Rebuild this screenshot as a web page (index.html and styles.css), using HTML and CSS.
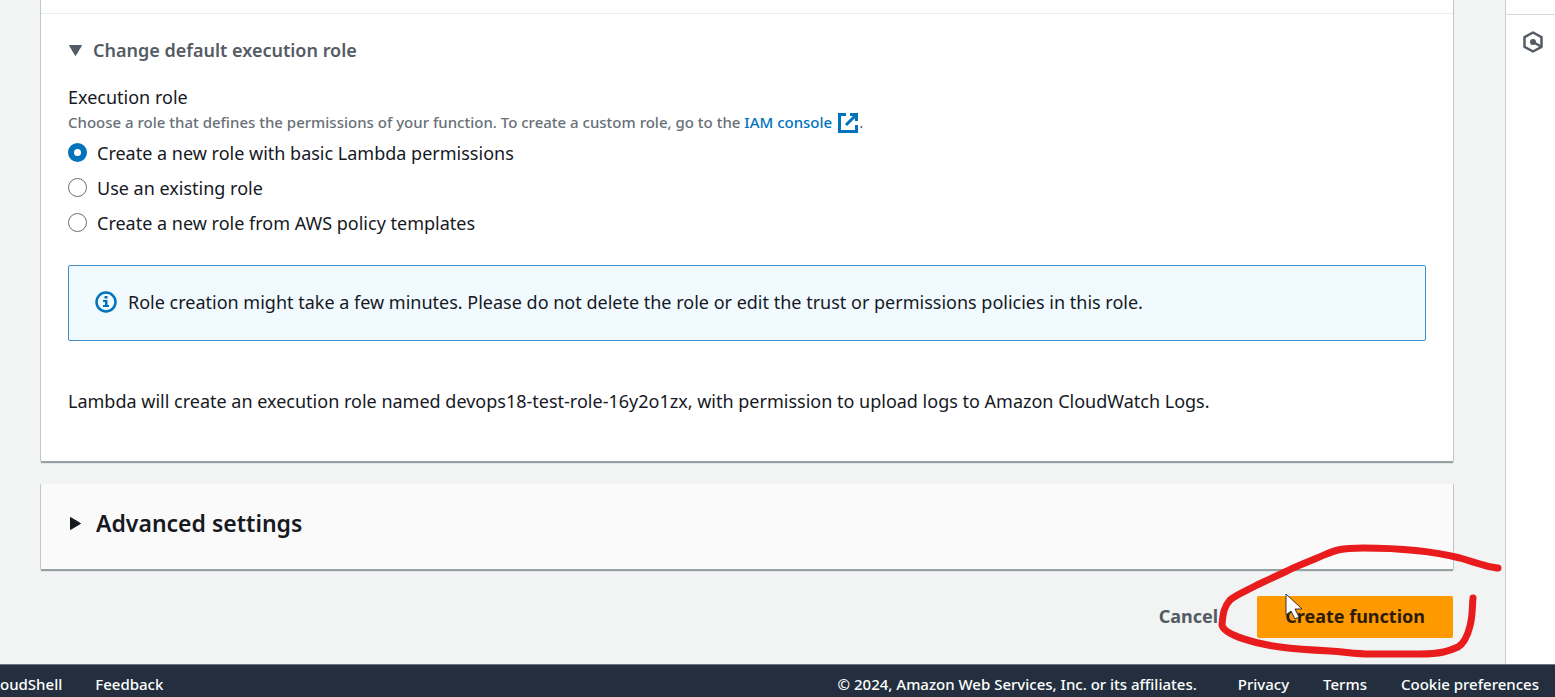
FILE: index.html
```html
<!DOCTYPE html>
<html lang="en">
<head>
<meta charset="utf-8">
<title>Create function - Lambda</title>
<link rel="stylesheet" href="styles.css">
</head>
<body>
<div class="shell">
  <main class="content">
    <section class="card">
      <details class="role" open>
        <summary class="role-summary">
          <svg class="caret" viewBox="0 0 14 14" aria-hidden="true"><path d="M1.500 2.500h12L7.500 12.500z" fill="currentColor" stroke="currentColor" stroke-linejoin="round"/></svg>
          <span>Change default execution role</span>
        </summary>
        <fieldset class="role-options">
          <legend class="label">Execution role</legend>
          <p class="hint">Choose a role that defines the permissions of your function. To create a custom role, go to the <a href="#iam" class="link">IAM console<svg class="external" viewBox="0 0 20 20" aria-hidden="true"><path d="M8 1.500H1.500v17h17V12M12 1.500h6.500V8M18 2L8 12" fill="none" stroke="currentColor" stroke-width="3"/></svg></a>.</p>
          <label class="option"><input type="radio" name="role" class="radio" checked>Create a new role with basic Lambda permissions</label>
          <label class="option"><input type="radio" name="role" class="radio">Use an existing role</label>
          <label class="option"><input type="radio" name="role" class="radio">Create a new role from AWS policy templates</label>
        </fieldset>
        <div class="alert">
          <svg class="info" viewBox="0 0 22 22" aria-hidden="true"><circle cx="11" cy="11" r="9.500" fill="none" stroke="currentColor" stroke-width="2.500"/><path d="M9.500 5h3v2.500h-3zM8 9h4.500v5H14v2H8v-2h2v-3H8z" fill="currentColor"/></svg>
          <span>Role creation might take a few minutes. Please do not delete the role or edit the trust or permissions policies in this role.</span>
        </div>
        <p class="note">Lambda will create an execution role named devops18-test-role-16y2o1zx, with permission to upload logs to Amazon CloudWatch Logs.</p>
      </details>
    </section>
    <details class="card advanced">
      <summary class="advanced-summary">
        <svg class="caret" viewBox="0 0 14 14" aria-hidden="true"><path d="M2.500 1.500v12L12.500 7.500z" fill="currentColor" stroke="currentColor" stroke-linejoin="round"/></svg>
        <span>Advanced settings</span>
      </summary>
    </details>
    <div class="actions">
      <button type="button" class="button">Cancel</button>
      <button type="button" class="button primary">Create function</button>
      <svg class="marker" viewBox="0 0 290 118" aria-hidden="true">
        <path d="M70 52v21l5-4 4 8 4-2-4-8h7z" fill="#fff" stroke="#333" stroke-linejoin="round"/>
        <path d="M282 26C275 26 267 23 244 16C220 10 185 6 147 6C121 6 118 9 101 16C85 23 80 24 71 29L41 43C28 50 20 53 14 58C7 66 7 73 6 83C8 93 40 102 64 105C80 107 95 108 114 109C130 110 140 112 154 112H204C225 112 233 109 242 105C249 101 252 92 254 84C257 72 256 65 257 56" fill="none" stroke="#e81c1c" stroke-width="7" stroke-linecap="round" stroke-linejoin="round"/>
      </svg>
    </div>
  </main>
  <aside class="rail">
    <button type="button" class="rail-button" aria-label="Tools">
      <svg class="hexagon" viewBox="0 0 20 22" aria-hidden="true"><path d="M10 1.500l8.500 4.700v9.600L10 20.500l-8.500-4.700V6.200z" fill="none" stroke="currentColor" stroke-width="2.500" stroke-linejoin="round"/><circle cx="10" cy="11" r="3" fill="currentColor"/><path d="M10 11l8 4.500" stroke="currentColor" stroke-width="2.500"/></svg>
    </button>
  </aside>
</div>
<footer class="footer">
  <nav class="footer-group"><a href="#shell">oudShell</a><a href="#feedback">Feedback</a></nav>
  <nav class="footer-group legal"><span class="copyright">© 2024, Amazon Web Services, Inc. or its affiliates.</span><a href="#privacy">Privacy</a><a href="#terms">Terms</a><a href="#cookies">Cookie preferences</a></nav>
</footer>
</body>
</html>
```
FILE: styles.css
```css
* { box-sizing: border-box; }
body {
  margin: 0;
  min-height: 100vh;
  display: flex;
  flex-direction: column;
  background: #f2f3f3;
  color: #16191f;
  font: 18px/24px "Noto Sans", "Open Sans", sans-serif;
}
p { margin: 0; }
summary { list-style: none; cursor: pointer; }
button { border: 0; background: none; font: inherit; }
.shell { flex: 1; display: flex; }
.content { flex: 1; min-width: 0; padding: 0 52px 26px 41px; }
.card {
  background: #fff;
  box-shadow: 0 2px 1px #95a1a2, -1px 0 #c9cfcf, 1px 0 #c9cfcf;
  padding: 13px 0 48px;
}
.role { border-top: 1px solid #eaeded; padding: 24px 27px 0; }
.role-summary, .advanced-summary { display: flex; align-items: center; font-weight: 600; }
.role-summary { gap: 11px; color: #545b64; }
.caret { width: 14px; height: 14px; }
.role-options { border: 0; margin: 0; padding: 23px 0 0; }
.label { float: left; width: 100%; padding: 0; }
.hint { clear: both; padding: 1px 0; font-size: 15px; font-weight: 500; color: #687078; }
.link { color: #0073bb; text-decoration: none; }
.external { width: 20px; height: 20px; margin: 0 1px 0 6px; vertical-align: -5px; }
.option { display: flex; align-items: center; gap: 10px; height: 35px; }
.radio {
  appearance: none;
  width: 19px;
  height: 19px;
  margin: 0;
  border: 1px solid #687078;
  border-radius: 50%;
  background: #fff;
}
.radio:checked { border: 6px solid #0073bb; }
.alert {
  display: flex;
  align-items: center;
  gap: 11px;
  margin-top: 25px;
  padding: 24px 26px 26px;
  border: 1px solid #3f8fc4;
  border-radius: 2px;
  background: #f1faff;
}
.info { width: 22px; height: 22px; color: #0073bb; }
.note { padding-top: 48px; }
.advanced { margin-top: 23px; padding: 25px 27px 32px; background: #fafafa; }
.advanced-summary { gap: 14px; font-size: 23px; line-height: 28px; }
.actions { position: relative; display: flex; justify-content: flex-end; gap: 11px; margin-top: 27px; }
.button { padding: 8px 28px 10px; border-radius: 2px; font-weight: 700; color: #545b64; }
.primary { background: #ff9900; color: #2b1c0c; }
.marker { position: absolute; top: -54px; right: -53px; width: 290px; height: 118px; pointer-events: none; }
.rail { width: 50px; border-left: 1px solid #c9cfcf; background: #fff; padding-top: 14px; }
.rail-button { display: block; width: 100%; padding: 16px 0 0 4px; border-top: 1px solid #d5dbdb; color: #545b64; }
.hexagon { display: block; width: 20px; height: 22px; margin: 0 auto; }
.footer {
  display: flex;
  justify-content: space-between;
  padding: 7px 16px 1px 0;
  border-top: 1px solid #6b7580;
  background: #232f3e;
  color: #fff;
  font-size: 15px;
  font-weight: 500;
}
.footer a { color: inherit; text-decoration: none; }
.footer-group { display: flex; gap: 33px; }
.legal { gap: 34px; }
.copyright { margin-right: 7px; }
```
